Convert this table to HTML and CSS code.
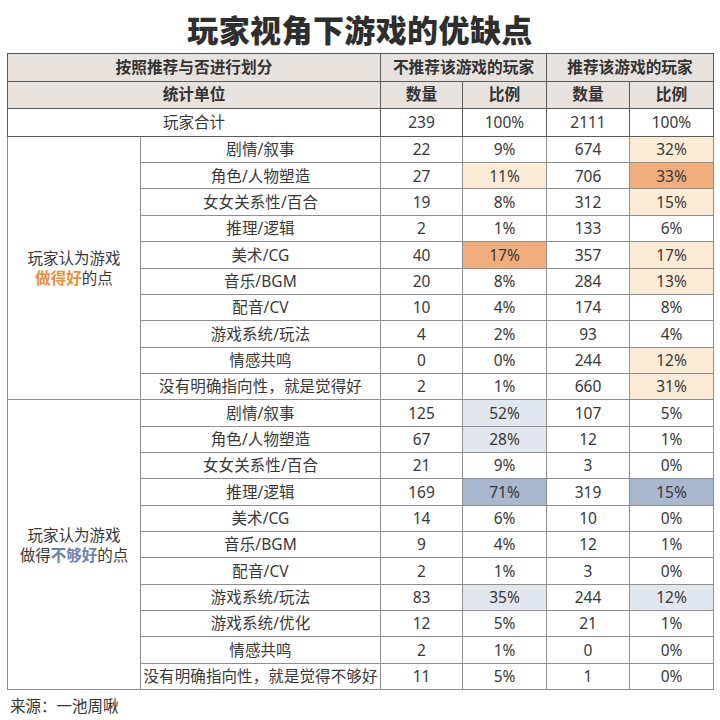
FILE: index.html
```html
<!DOCTYPE html>
<html lang="zh">
<head>
<meta charset="utf-8">
<link rel="stylesheet" href="styles.css">
</head>
<body>
<div class="page">
  <h1 class="title">玩家视角下游戏的优缺点</h1>
  <table class="grid">
    <colgroup>
      <col class="c-group"><col class="c-item"><col class="c-n1"><col class="c-p1"><col class="c-n2"><col class="c-p2">
    </colgroup>
    <thead>
      <tr class="hrow">
        <th colspan="2">按照推荐与否进行划分</th>
        <th colspan="2" class="sep">不推荐该游戏的玩家</th>
        <th colspan="2" class="sep">推荐该游戏的玩家</th>
      </tr>
      <tr class="hrow">
        <th colspan="2">统计单位</th>
        <th class="sep">数量</th><th>比例</th>
        <th class="sep">数量</th><th>比例</th>
      </tr>
      <tr class="hrow total">
        <td colspan="2">玩家合计</td>
        <td class="sep">239</td><td>100%</td>
        <td class="sep">2111</td><td>100%</td>
      </tr>
    </thead>
    <tbody class="grp">
      <tr>
        <td rowspan="10" class="glabel">玩家认为游戏<br><b class="good">做得好</b>的点</td>
        <td class="item">剧情/叙事</td><td class="sep">22</td><td>9%</td><td class="sep">674</td><td class="o1">32%</td>
      </tr>
      <tr><td class="item">角色/人物塑造</td><td class="sep">27</td><td class="o1">11%</td><td class="sep">706</td><td class="o2">33%</td></tr>
      <tr><td class="item">女女关系性/百合</td><td class="sep">19</td><td>8%</td><td class="sep">312</td><td class="o1">15%</td></tr>
      <tr><td class="item">推理/逻辑</td><td class="sep">2</td><td>1%</td><td class="sep">133</td><td>6%</td></tr>
      <tr><td class="item">美术/CG</td><td class="sep">40</td><td class="o2">17%</td><td class="sep">357</td><td class="o1">17%</td></tr>
      <tr><td class="item">音乐/BGM</td><td class="sep">20</td><td>8%</td><td class="sep">284</td><td class="o1">13%</td></tr>
      <tr><td class="item">配音/CV</td><td class="sep">10</td><td>4%</td><td class="sep">174</td><td>8%</td></tr>
      <tr><td class="item">游戏系统/玩法</td><td class="sep">4</td><td>2%</td><td class="sep">93</td><td>4%</td></tr>
      <tr><td class="item">情感共鸣</td><td class="sep">0</td><td>0%</td><td class="sep">244</td><td class="o1">12%</td></tr>
      <tr><td class="item">没有明确指向性，就是觉得好</td><td class="sep">2</td><td>1%</td><td class="sep">660</td><td class="o1">31%</td></tr>
    </tbody>
    <tbody class="grp">
      <tr>
        <td rowspan="11" class="glabel">玩家认为游戏<br>做得<b class="bad">不够好</b>的点</td>
        <td class="item">剧情/叙事</td><td class="sep">125</td><td class="b1">52%</td><td class="sep">107</td><td>5%</td>
      </tr>
      <tr><td class="item">角色/人物塑造</td><td class="sep">67</td><td class="b1">28%</td><td class="sep">12</td><td>1%</td></tr>
      <tr><td class="item">女女关系性/百合</td><td class="sep">21</td><td>9%</td><td class="sep">3</td><td>0%</td></tr>
      <tr><td class="item">推理/逻辑</td><td class="sep">169</td><td class="b2">71%</td><td class="sep">319</td><td class="b2">15%</td></tr>
      <tr><td class="item">美术/CG</td><td class="sep">14</td><td>6%</td><td class="sep">10</td><td>0%</td></tr>
      <tr><td class="item">音乐/BGM</td><td class="sep">9</td><td>4%</td><td class="sep">12</td><td>1%</td></tr>
      <tr><td class="item">配音/CV</td><td class="sep">2</td><td>1%</td><td class="sep">3</td><td>0%</td></tr>
      <tr><td class="item">游戏系统/玩法</td><td class="sep">83</td><td class="b1">35%</td><td class="sep">244</td><td class="b1">12%</td></tr>
      <tr><td class="item">游戏系统/优化</td><td class="sep">12</td><td>5%</td><td class="sep">21</td><td>1%</td></tr>
      <tr><td class="item">情感共鸣</td><td class="sep">2</td><td>1%</td><td class="sep">0</td><td>0%</td></tr>
      <tr><td class="item">没有明确指向性，就是觉得不够好</td><td class="sep">11</td><td>5%</td><td class="sep">1</td><td>0%</td></tr>
    </tbody>
  </table>
  <p class="source">来源：一池周啾</p>
</div>
</body>
</html>
```
FILE: styles.css
```css
* { box-sizing: border-box; }
html, body { margin: 0; padding: 0; background: #fff; }
body {
  font-family: "Noto Sans", "Noto Sans CJK SC", sans-serif;
  color: #333;
}
.page {
  width: 720px;
  height: 720px;
  padding: 0 7px;
}
.title {
  margin: 0;
  height: 53px;
  display: flex;
  align-items: center;
  justify-content: center;
  padding-top: 3px;
  font-family: "Noto Sans CJK SC", sans-serif;
  font-size: 31px;
  font-weight: 900;
  letter-spacing: 0.4px;
  color: #2e2e2e;
}
.grid {
  width: 706px;
  border-collapse: collapse;
  table-layout: fixed;
  border: 1.5px solid #3c3c3c;
  font-size: 15.5px;
}
.c-group { width: 133px; }
.c-item { width: 240px; }
.c-n1 { width: 82px; }
.c-p1 { width: 84px; }
.c-n2 { width: 83px; }
.c-p2 { width: 84px; }
.grid th, .grid td {
  padding: 0;
  text-align: center;
  vertical-align: middle;
  white-space: nowrap;
  border: 1px solid #8e8e8e;
  line-height: 1.2;
}
.grid td { font-weight: 400; color: #383838; }
.hrow th, .hrow td { height: 27.6px; border-color: #5a5a5a; }
.hrow th {
  background: #e8e2de;
  font-family: "Noto Sans CJK SC", sans-serif;
  font-weight: 700;
  font-size: 15.7px;
  color: #333;
}
.grp td { height: 26.35px; }
.grp { border-top: 1.5px solid #3c3c3c; }
.grid .sep { border-left-color: #555; }
.item { border-left-color: #777; letter-spacing: 0.1px; }
.glabel {
  line-height: 20px !important;
}
.glabel b { font-weight: 700; }
.good { color: #e8913d; }
.bad { color: #6c83ad; }
.o1 { background: #fcebd6; }
.o2 { background: #f1ae7c; }
.b1 { background: #e1e6ef; }
.b2 { background: #a9b7cf; }
.source {
  margin: 0;
  height: 30px;
  display: flex;
  align-items: center;
  padding-left: 3px;
  font-family: "Noto Sans CJK SC", sans-serif;
  font-size: 15.5px;
  color: #333;
}
```
